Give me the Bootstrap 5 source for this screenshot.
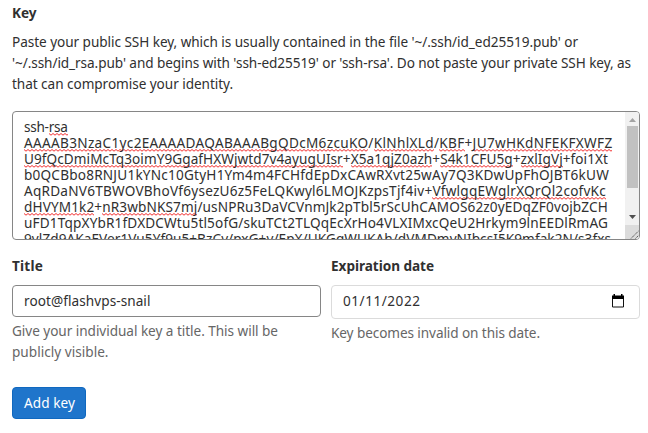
<!DOCTYPE html>
<html lang="en">
<head>
<meta charset="utf-8">
<meta name="viewport" content="width=device-width, initial-scale=1">
<title>Add an SSH key</title>
<link href="https://cdn.jsdelivr.net/npm/bootstrap@5.3.0/dist/css/bootstrap.min.css" rel="stylesheet">
<style>
body{font-family:"Noto Sans","Open Sans",sans-serif;font-size:13.6px;line-height:21px;color:#303030;background:#fff;overflow:hidden}
.key-form{padding:2px 8px 0 12px}
.line{display:block;width:max-content;white-space:pre}
.form-label{font-weight:700;line-height:21px;margin-bottom:8px}
.key-area{height:129px;border:1px solid #868686;border-radius:4px;margin-top:17px;position:relative;overflow:hidden;background:#fff}
.key-text{line-height:16px;padding:7px 0 0 11px}
.sp{background:url("data:image/svg+xml,%3Csvg xmlns='http://www.w3.org/2000/svg' width='4' height='3'%3E%3Cpath d='M0 .5L2 2.200L4 .5' fill='none' stroke='%23f01818' stroke-width='.9'/%3E%3C/svg%3E") repeat-x 0 100%}
.scroll{position:absolute;top:-1px;right:-1px;width:15px;height:129px;background:#f1f1f1}
.fields{display:grid;grid-template-columns:309px 309px;column-gap:10px;margin-top:15px}
.fields .form-label{margin-bottom:9px}
.form-control{font-size:13.6px;line-height:16px;color:#303030;padding:7px 11px;height:32px;border:1px solid #868686;border-radius:4px;display:flex;align-items:center;justify-content:space-between}
.form-control.date{height:34px;border-color:#dbdbdb;padding:6px 14px 8px 11px}
.help{color:#666;margin-top:3px}
.btn-primary{--bs-btn-bg:#1f75cb;--bs-btn-border-color:#1068bf;font-size:13.6px;line-height:16px;width:74px;height:32px;padding:7px 11px;border-radius:4px;margin-top:25px}
</style>
<script src="https://cdn.jsdelivr.net/npm/bootstrap@5.3.0/dist/js/bootstrap.bundle.min.js"></script>
</head>
<body>
<form class="key-form">
  <label class="form-label d-block"><span class="line" data-w="24.5">Key</span></label>
  <div>
    <span class="line" data-w="566">Paste your public SSH key, which is usually contained in the file '~/.ssh/id_ed25519.pub' or</span>
    <span class="line" data-w="619">'~/.ssh/id_rsa.pub' and begins with 'ssh-ed25519' or 'ssh-rsa'. Do not paste your private SSH key, as</span>
    <span class="line" data-w="221">that can compromise your identity.</span>
  </div>
  <div class="key-area">
    <div class="key-text">
      <span class="line" data-w="43.5">ssh-<span class="sp">rsa</span></span>
      <span class="line" data-w="588.5"><span class="sp">AAAAB3NzaC1yc2EAAAADAQABAAABgQDcM6zcuKO</span>/<span class="sp">KlNhlXLd</span>/<span class="sp">KBF</span>+<span class="sp">JU7wHKdNFEKFXWFZ</span></span>
      <span class="line" data-w="584"><span class="sp">U9fQcDmiMcTq3oimY9GgafHXWjwtd7v4ayugUIsr</span>+<span class="sp">X5a1qjZ0azh</span>+<span class="sp">S4k1CFU5g</span>+<span class="sp">zxlIgVj</span>+foi1Xt</span>
      <span class="line" data-w="585">b0QCBbo8RNJU1kYNc10GtyH1Ym4m4FCHfdEpDxCAwRXvt25wAy7Q3KDwUpFhOJBT6kUW</span>
      <span class="line" data-w="582">AqRDaNV6TBWOVBhoVf6ysezU6z5FeLQKwyl6LMOJKzpsTjf4iv+<span class="sp">VfwlgqEWglrXQrQl2cofvKc</span></span>
      <span class="line" data-w="584"><span class="sp">dHVYM1k2</span>+<span class="sp">nR3wbNKS7mj</span>/usNPRu3DaVCVnmJk2pTbl5rScUhCAMOS62z0yEDqZF0vojbZCH</span>
      <span class="line" data-w="584">uFD1TqpXYbR1fDXDCWtu5tl5ofG/skuTCt2TLQqEcXrHo4VLXIMxcQeU2Hrkym9lnEEDlRmAG</span>
      <span class="line" data-w="587">9vlZd9AKaEVer1Vu5Yf9u5+BzCv/pxG+v/EpX/UKGqWUKAh/dVMDmvNIbcsI5K9mfak2N/s3fxs</span>
    </div>
    <svg class="scroll" viewBox="0 0 15 129">
      <path d="M4 11h7L7.500 7z" fill="#a3a3a3"/>
      <path d="M2 15h11v62H2z" fill="#c1c1c1"/>
      <path d="M4 104h7l-3.500 4z" fill="#505050"/>
      <path d="M0 114h15v15H0z" fill="#dcdcdc"/>
      <path d="M6 127.500L13.500 120M10.500 127.500L13.500 124.500" stroke="#555" stroke-width="1" stroke-dasharray="1.400 .6"/>
    </svg>
  </div>
  <div class="fields">
    <div>
      <label class="form-label d-block"><span class="line" data-w="31">Title</span></label>
      <div class="form-control" role="textbox" tabindex="0"><span class="line" data-w="126.500">root@flashvps-snail</span></div>
      <div class="help">
        <span class="line" data-w="266">Give your individual key a title. This will be</span>
        <span class="line" data-w="96.500">publicly visible.</span>
      </div>
    </div>
    <div>
      <label class="form-label d-block"><span class="line" data-w="103">Expiration date</span></label>
      <div class="form-control date" role="textbox" tabindex="0"><span class="line" data-w="77.500">01/11/2022</span>
        <svg width="14" height="14" viewBox="0 0 14 14"><path d="M1.500 2.500h11v10.500h-11z" fill="none" stroke="#111" stroke-width="1"/><path d="M1 1.500h12V5H1zM2.500 0H4v3H2.500zM10 0h1.500v3H10z"/></svg>
      </div>
      <div class="help"><span class="line" data-w="209">Key becomes invalid on this date.</span></div>
    </div>
  </div>
  <button type="button" class="btn btn-primary"><span class="line" data-w="51">Add key</span></button>
</form>
<script>
document.querySelectorAll('.line').forEach(function (el) {
  var target = parseFloat(el.dataset.w), natural = el.getBoundingClientRect().width;
  el.style.letterSpacing = (target - natural) / el.textContent.length + 'px';
});
</script>
</body>
</html>
